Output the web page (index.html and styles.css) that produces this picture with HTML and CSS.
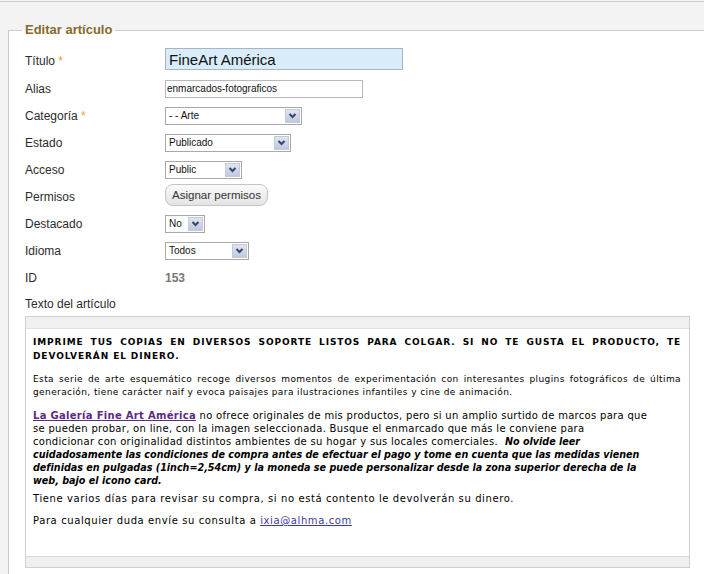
FILE: index.html
```html
<!DOCTYPE html>
<html lang="es">
<head>
    <meta charset="UTF-8">
    <title>Editar artículo</title>
    <link rel="stylesheet" href="styles.css">
</head>
<body>

<div class="page">
    <fieldset class="panel">
        <legend>Editar artículo</legend>

        <div class="form">
            <!-- titulo -->
            <div class="row first">
                <span class="label">Título <span class="star">*</span></span>
                <input class="field title_field" type="text" value="FineArt América">
            </div>
            <div class="row">
                <span class="label">Alias</span>
                <input class="field alias_field" type="text" value="enmarcados-fotograficos">
            </div>
            <div class="row">
                <span class="label">Categoría <span class="star">*</span></span>
                <div class="select sel_cat"><span class="select_text">- - Arte</span><span class="select_btn"><svg width="13" height="13" viewBox="0 0 13 13"><path d="M3.5 5 L6.5 8 L9.5 5" fill="none" stroke="#36476b" stroke-width="2"/></svg></span></div>
            </div>
            <div class="row">
                <span class="label">Estado</span>
                <div class="select sel_estado"><span class="select_text">Publicado</span><span class="select_btn"><svg width="13" height="13" viewBox="0 0 13 13"><path d="M3.5 5 L6.5 8 L9.5 5" fill="none" stroke="#36476b" stroke-width="2"/></svg></span></div>
            </div>
            <div class="row">
                <span class="label">Acceso</span>
                <div class="select sel_acceso"><span class="select_text">Public</span><span class="select_btn"><svg width="13" height="13" viewBox="0 0 13 13"><path d="M3.5 5 L6.5 8 L9.5 5" fill="none" stroke="#36476b" stroke-width="2"/></svg></span></div>
            </div>
            <div class="row">
                <span class="label">Permisos</span>
                <a href="javascript:;" class="button">Asignar permisos</a>
            </div>
            <div class="row">
                <span class="label">Destacado</span>
                <div class="select sel_destacado"><span class="select_text">No</span><span class="select_btn"><svg width="13" height="13" viewBox="0 0 13 13"><path d="M3.5 5 L6.5 8 L9.5 5" fill="none" stroke="#36476b" stroke-width="2"/></svg></span></div>
            </div>
            <div class="row">
                <span class="label">Idioma</span>
                <div class="select sel_idioma"><span class="select_text">Todos</span><span class="select_btn"><svg width="13" height="13" viewBox="0 0 13 13"><path d="M3.5 5 L6.5 8 L9.5 5" fill="none" stroke="#36476b" stroke-width="2"/></svg></span></div>
            </div>
            <div class="row">
                <span class="label">ID</span>
                <span class="id_value">153</span>
            </div>
            <div class="row last">
                <span class="label">Texto del artículo</span>
            </div>

            <!-- editor -->
            <div class="editor">
                <div class="editor_bar"></div>
                <div class="editor_body">
                    <h4 class="intro">Imprime tus copias en diversos soporte listos para colgar. Si no te gusta el producto, te devolverán el dinero.</h4>
                    <p class="small">Esta serie de arte esquemático recoge diversos momentos de experimentación con interesantes plugins fotográficos de última generación, tiene carácter naif y evoca paisajes para ilustraciones infantiles y cine de animación.</p>
                    <p class="text gap_small"><a href="javascript:;" class="gallery">La Galería Fine Art América</a> no ofrece originales de mis productos, pero si un amplio surtido de marcos para que<br>se pueden probar, on line, con la imagen seleccionada. Busque el enmarcado que más le conviene para<br>condicionar con originalidad distintos ambientes de su hogar y sus locales comerciales.&nbsp; <em>No olvide leer<br>cuidadosamente las condiciones de compra antes de efectuar el pago y tome en cuenta que las medidas vienen<br>definidas en pulgadas (1inch=2,54cm) y la moneda se puede personalizar desde la zona superior derecha de la<br>web, bajo el icono card.</em></p>
                    <p class="text wide">Tiene varios días para revisar su compra, si no está contento le devolverán su dinero.</p>
                    <p class="text wide">Para cualquier duda envíe su consulta a <a href="javascript:;" class="mail">ixia@alhma.com</a></p>
                </div>
                <div class="editor_bar bottom"></div>
            </div>
        </div>
    </fieldset>
</div>

</body>
</html>
```

FILE: styles.css
```css
*{
    margin: 0;
    padding: 0;
    box-sizing: border-box;
}
html, body{
    background: #f3f3f3;
    overflow: hidden;
}
body{
    width: 704px;
    height: 574px;
    font-family: "Liberation Sans", Arial, sans-serif;
}
.page{
    margin-top: 1px;
    border-top: 1px solid #cfcfcf;
    padding: 21px 0 0 8px;
}

/* fieldset */
.panel{
    width: 720px;
    border: 1px solid #cccccc;
    border-right: none;
    background: #fff;
    padding: 0 0 40px 13px;
}
.panel legend{
    padding: 0 3px;
    font-size: 13px;
    line-height: 14px;
    font-weight: bold;
    color: #86692c;
}
.form{
    padding: 10px 0 0 3px;
}
.row{
    display: flex;
    align-items: center;
    height: 27px;
}
.row.first{
    height: 28px;
}
.row.last{
    height: 25px;
}
.label{
    width: 140px;
    font-size: 12px;
    color: #2b2b2b;
}
.star{
    color: #f0a030;
}

/* inputs */
.field{
    display: block;
    border: 1px solid #b4b9c0;
    font-family: "Liberation Sans", Arial, sans-serif;
    color: #111;
    outline: none;
}
.title_field{
    width: 238px;
    height: 22px;
    margin-top: -4px;
    padding: 0 3px;
    font-size: 15px;
    background: #d9ecfa;
    border-color: #a9b5c3;
}
.alias_field{
    width: 198px;
    height: 18px;
    padding: 0 1px;
    font-size: 10px;
    background: #fff;
}

/* select */
.select{
    display: flex;
    align-items: center;
    height: 18px;
    border: 1px solid #a9a9a9;
    background: #fff;
}
.select_text{
    flex: 1;
    padding-left: 3px;
    font-size: 10px;
    color: #111;
}
.select_btn{
    display: flex;
    align-items: center;
    justify-content: center;
    width: 15px;
    height: 14px;
    margin-right: 1px;
    border: 1px solid #c3cad8;
    background: linear-gradient(#dfe5f1, #bfc9de);
}
.sel_cat{ width: 137px; }
.sel_estado{ width: 126px; }
.sel_acceso{ width: 77px; }
.sel_destacado{ width: 40px; }
.sel_idioma{ width: 84px; }

.button{
    display: block;
    width: 103px;
    height: 22px;
    margin-top: -4px;
    line-height: 20px;
    text-align: center;
    font-size: 11.5px;
    color: #333;
    text-decoration: none;
    border: 1px solid #c4c4c4;
    border-radius: 8px;
    background: linear-gradient(#fbfbfb, #e3e3e3);
}
.id_value{
    font-size: 12px;
    font-weight: bold;
    color: #777;
}

/* editor */
.editor{
    width: 665px;
    height: 252px;
    border: 1px solid #cfcfcf;
    display: flex;
    flex-direction: column;
    font-family: "DejaVu Sans", Verdana, sans-serif;
    color: #000;
}
.editor_bar{
    height: 12px;
    background: #f0f0f0;
    border-bottom: 1px solid #e2e2e2;
}
.editor_bar.bottom{
    height: 11px;
    border-bottom: none;
    border-top: 1px solid #d8d8d8;
}
.editor_body{
    flex: 1;
    padding: 6px 8px 0 7px;
}
.intro{
    font-size: 9px;
    line-height: 14px;
    letter-spacing: 0.9px;
    text-transform: uppercase;
    text-align: justify;
    margin-bottom: 10px;
}
.small{
    font-size: 9px;
    line-height: 13px;
    letter-spacing: 0.4px;
    text-align: justify;
    margin-bottom: 10px;
}
.text{
    font-size: 10px;
    line-height: 13px;
    letter-spacing: 0.3px;
    white-space: nowrap;
    margin-bottom: 9px;
}
.text.wide{
    letter-spacing: 0.6px;
}
.text.gap_small{
    margin-bottom: 5px;
}
.text em{
    font-size: 9.6px;
    font-weight: bold;
    letter-spacing: 0;
}
.gallery{
    color: #5b2a83;
    font-weight: bold;
}
.mail{
    color: #3c3ca0;
}
```
